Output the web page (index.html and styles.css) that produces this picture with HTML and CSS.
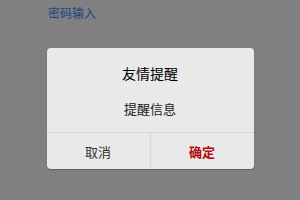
FILE: index.html
```html
<!DOCTYPE html>
<html lang="zh-CN">
<head>
    <meta charset="UTF-8">
    <meta name="viewport" content="width=device-width, initial-scale=1.0">
    <title>友情提醒</title>
    <link rel="stylesheet" href="styles.css">
</head>
<body>
    <a class="link" href="#">密码输入</a>

    <!-- alert dialog -->
    <div class="dialog">
        <div class="dialog-body">
            <div class="dialog-title">友情提醒</div>
            <div class="dialog-msg">提醒信息</div>
        </div>
        <div class="dialog-btns">
            <div class="btn">取消</div>
            <div class="btn btn-ok">确定</div>
        </div>
    </div>
</body>
</html>
```

FILE: styles.css
```css
html, body {
    margin: 0;
    height: 100%;
    background: #808080;
    font-family: "Noto Sans CJK SC", "Liberation Sans", sans-serif;
}

.link {
    display: block;
    padding: 4px 0 0 48px;
    height: 20px;
    font-size: 12px;
    line-height: 18px;
    color: #1c4380;
    text-decoration: none;
}

.dialog {
    width: 207px;
    margin: 24px auto 0;
    background: #e9e9e9;
    border-radius: 4px;
    box-shadow: 0 1px 1px rgba(0, 0, 0, 0.25);
    overflow: hidden;
}

.dialog-body {
    height: 85px;
    padding-top: 15px;
    box-sizing: border-box;
    text-align: center;
    border-bottom: 1px solid #d8d8d8;
}

.dialog-title {
    font-size: 14px;
    line-height: 20px;
    color: #000;
}

.dialog-msg {
    margin-top: 17px;
    font-size: 13px;
    line-height: 18px;
    color: #222;
}

.dialog-btns {
    display: flex;
    height: 36px;
}

.btn {
    flex: 1;
    display: flex;
    justify-content: center;
    align-items: center;
    font-size: 13px;
    color: #333;
}

.btn + .btn {
    border-left: 1px solid #d8d8d8;
}

.btn-ok {
    color: #b30d0d;
    font-weight: bold;
}
```
